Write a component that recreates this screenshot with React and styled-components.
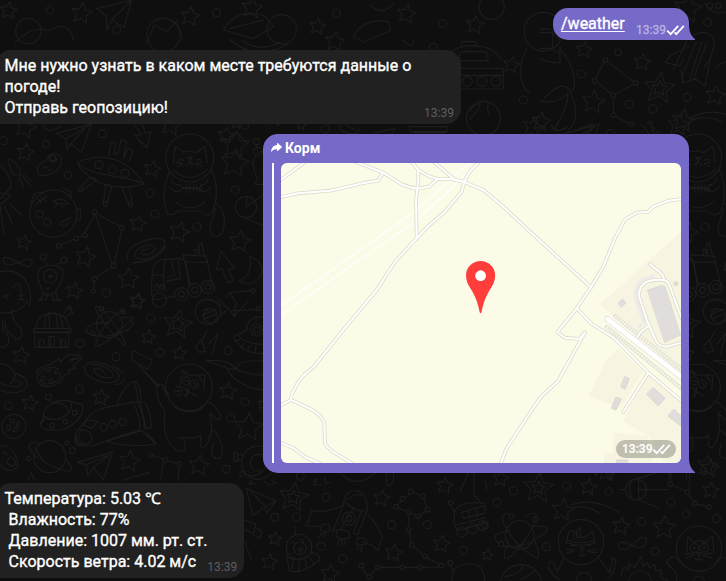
import React from "react";
import styled, { createGlobalStyle } from "styled-components";

const GlobalStyle = createGlobalStyle`
  html, body { margin: 0; background: #0f0f0f; overflow: hidden; }
  * { box-sizing: border-box; }
`;

const Screen = styled.main`
  position: relative;
  width: 726px;
  height: 581px;
  overflow: hidden;
  background: #0f0f0f;
  font-family: Roboto, "Noto Sans", sans-serif;
  color: #fff;
`;

const Wallpaper = styled.svg`
  position: absolute;
  inset: 0;
  fill: none;
  stroke: #1d1d1e;
  stroke-width: 3.4;
  stroke-linejoin: round;
  stroke-linecap: round;
`;

const Messages = styled.div`
  position: relative;
  display: flex;
  flex-direction: column;
  align-items: flex-start;
  gap: 10px;
  padding: 8px 37px 0 0;
`;

const Bubble = styled.article`
  position: relative;
  display: flex;
  width: ${(p) => p.$width}px;
  height: ${(p) => p.$height}px;
`;

const Incoming = styled(Bubble)`
  margin-left: -4px;
  padding: 5px 7px 3px 8.6px;
  border-radius: 15px 15px 15px 0;
  background: #212121;
`;

const Outgoing = styled(Bubble)`
  align-self: flex-end;
  border-radius: 15px 15px 0 15px;
  background: #766ac8;
`;

const CommandBubble = styled(Outgoing)`
  padding: 5px 4px 2px 8px;
  justify-content: space-between;
`;

const LocationBubble = styled(Outgoing)`
  flex-direction: column;
  padding: 4px 8px 10px;
`;

const Text = styled.p`
  margin: 0;
  flex: 1;
  font-size: 16px;
  line-height: 21px;
  white-space: pre;
  -webkit-text-stroke: 0.35px #fff;
`;

const Command = styled.a`
  font-size: 16px;
  line-height: 21px;
  text-decoration: underline;
  text-underline-offset: 2px;
  -webkit-text-stroke: 0.35px #fff;
`;

const Meta = styled.span`
  display: flex;
  align-items: center;
  align-self: flex-end;
  height: 16px;
  font-size: 12px;
  line-height: 16px;
  color: ${(p) => p.$color};
  -webkit-text-stroke: ${(p) => (p.$strong ? "0.3px" : "0")} currentColor;
`;

const TailShape = styled.svg`
  position: absolute;
  right: -6px;
  bottom: 0;
  fill: #766ac8;
`;

const Forwarded = styled.header`
  display: flex;
  align-items: center;
  gap: 3px;
  height: 19px;
  font-size: 14px;
  font-weight: 700;
`;

const Quote = styled.div`
  display: flex;
  margin-top: 6px;
  margin-left: 1px;
  padding-left: 7px;
  border-left: 2px solid #fff;
  height: 300px;
`;

const MapCard = styled.div`
  position: relative;
  width: 400px;
  height: 300px;
  border-radius: 6px;
  overflow: hidden;
  background: #fcfbe7;
`;

const MapBadge = styled.span`
  position: absolute;
  right: 5px;
  bottom: 5px;
  display: flex;
  align-items: center;
  width: 60px;
  height: 18px;
  padding-left: 6px;
  border-radius: 9px;
  background: rgba(94, 94, 84, 0.36);
  font-size: 12px;
  font-weight: 500;
  -webkit-text-stroke: 0.2px #fff;
`;

const Tail = () => (
  <TailShape width="6" height="16" viewBox="0 0 6 16">
    <path d="M0 0C0 7 1.5 11.5 6 15V16H0Z" />
  </TailShape>
);

const Ticks = () => (
  <svg width="19" height="12" viewBox="0 0 19 12" fill="none" stroke="#fff" strokeWidth="1.75">
    <path d="M1.2 6.6 4.7 10.2 12.2 1.8M8.6 8.4 10.3 10.2 17.8 1.8" />
  </svg>
);

const ForwardIcon = () => (
  <svg width="11" height="9" viewBox="0 0 11 9" fill="#fff">
    <path d="M6 .3Q6.5-.2 7 .3L10.7 3.6Q11.2 4 10.7 4.5L7 7.8Q6 8.4 6 7.4V6.3C3.2 6.2 1.8 7 .8 8.5.3 9.2-.1 8.6.1 7.8.6 4.6 2.5 2.2 6 1.9Z" />
  </svg>
);

const starPath = ([cx, cy, r, rot = 0]) =>
  Array.from({ length: 10 }, (_, i) => {
    const a = ((i * 36 - 90 + rot) * Math.PI) / 180;
    const d = i % 2 ? r * 0.47 : r;
    return `${i ? "L" : "M"}${(cx + d * Math.cos(a)).toFixed(1)} ${(cy + d * Math.sin(a)).toFixed(1)}`;
  }).join("") + "Z";

const Doodles = ({ x, y, stars = [], rings = [], path }) => (
  <g transform={`translate(${x} ${y}) scale(.33333)`}>
    {stars.map((s, i) => <path key={i} d={starPath(s)} />)}
    {rings.map(([cx, cy, r = 12], i) => <circle key={i} cx={cx} cy={cy} r={r} />)}
    <path d={path} />
  </g>
);

const leftUpper = {
  stars: [[76, 83, 27, 10], [76, 8, 34, 15], [457, 132, 26, 12], [678, 31, 25, 8], [704, 115, 44, 8], [414, 297, 26, 10], [538, 322, 32, 15], [719, 350, 34, 8], [72, 352, 23, 12], [256, 397, 32, 12], [385, 462, 33, 4], [223, 498, 26, 12], [512, 0, 34, 8], [412, 528, 24, 12]],
  rings: [[10, 47], [138, 57, 11], [307, 26], [204, 151, 11], [450, 204], [465, 267], [591, 306], [706, 195], [319, 504], [734, 0], [297, 119], [338, 134], [375, 145], [160, 266, 71], [119, 268, 11], [141, 291, 11], [241, 194, 6], [316, 236, 6], [392, 240, 6], [284, 261, 7], [366, 309, 7], [341, 423, 7], [254, 331, 7], [229, 340, 7], [176, 363, 7], [284, 461, 7], [280, 499, 6], [151, 454, 20], [151, 454, 4], [130, 396, 9], [192, 406, 9], [569, 99, 72], [544, 508, 20], [584, 496, 20], [624, 486, 20], [544, 508, 9], [584, 496, 9], [624, 486, 9], [738, 246, 32], [770, 50, 9], [157, 102, 9], [760, 497, 6]],
  path: `M170 25 273-2 245 82 213 56 201 73 198 42ZM213 56 257 7M198 42 260 5
  M112 135C110 108 145 115 144 94C150 80 190 84 184 112C175 145 145 157 115 148ZM145 95Q160 80 172 105Q155 115 145 95M130 130Q136 122 142 130M145 136Q151 130 155 137
  M24 102Q55 107 62 150L40 148Q28 125 24 102M58 156 70 188M66 152 94 184M70 148 94 167
  M0 120Q30 145 34 185L0 222M0 240 11 325M13 244 38 299M31 238 63 270M0 204 32 207Q25 225 0 238
  M232 112Q355 62 432 177Q310 210 240 128ZM234 116C290 160 360 145 432 177M326 92 334 50 349 55 341 88 354 83 364 44 380 50 370 99 384 70 400 78 388 108
  M270 158 239 190M290 166 246 196M316 182 311 232M335 184 322 234M366 190 387 237M389 194 397 236M270 158Q282 154 290 166M314 181Q325 175 335 184M366 190Q380 180 390 194
  M285 268 252 326M290 266 360 304M286 268 337 417M365 316 343 417M335 426 289 457M283 468 281 492M248 333 235 337M222 343 182 361
  M94 245Q94 200 119 202Q142 205 139 217Q118 225 105 243M112 219 124 235M123 214 139 230M185 197 213 216V201L190 190M232 252 242 253 240 286 228 285M159 230Q184 213 204 235Q182 240 159 230M172 235 164 247M185 237 187 249M180 294Q200 285 213 276M178 298Q195 310 207 294
  M520 112 526 64 550 81Q570 74 587 83L615 64 622 112M536 107Q543 97 550 107M590 106Q598 98 605 107M563 97 577 97 570 106ZM570 106Q568 120 558 119M571 109Q575 122 581 117M530 112 548 116M532 124 548 119M605 112 590 116M605 124 590 119
  M509 137C488 185 489 230 501 265Q515 275 535 258H600Q620 281 638 260C655 215 651 170 633 131M521 137Q569 180 622 133M513 164Q517 178 538 180M626 160Q620 180 601 181M508 187Q527 208 545 195M632 187Q613 209 596 195M526 230Q570 266 617 230M650 235C685 270 676 333 650 334C612 331 638 289 647 251
  M536 179 550 190 600 188 609 178M542 198 550 188 607 193M560 178V202M570 176V203M580 178V202M590 180V198
  M383 404C370 355 470 330 489 345C510 358 466 406 420 402C382 391 420 360 452 360C480 367 459 390 430 389Q410 379 445 372M398 413C450 412 487 390 496 364
  M10 398C25 388 70 430 90 425C105 408 90 395 70 407C44 417 17 428 10 410Z
  M113 447C112 415 190 410 190 445C187 478 168 495 165 503C145 512 138 512 130 503 119 480 113 465 113 447M137 486 143 494 148 486M144 420 133 404M173 418 184 411M130 506 126 520 115 525H139L142 509M157 508 160 526H182L170 516 168 502M146 454H157
  M456 510C451 425 465 400 495 403L538 400C560 402 560 420 563 450L568 482M495 405 490 455 496 500M459 450H490M514 404 524 451 504 457M535 406 541 460 500 469M549 389 618 394 640 491M561 411 622 412M549 389 571 478M587 388 583 374 593 374 596 388M599 386 596 356 604 353 614 394M458 516 464 525 525 514M470 479Q480 482 474 495Q464 500 464 487ZM485 477Q494 483 488 494Q480 495 480 485Z
  M663 378 704 429 685 433 699 466 684 474 666 431 649 435ZM749 394C825 425 770 497 718 468Q760 450 749 394
  M404 0 424 28 404 32 441 69 452 20 437 25 424-5M130 0Q140 30 180 5M741 216 738 246M738 246 790 210M737 280 795 304M770 60 773 76M789 78Q765 82 758 115 769 160 773 160L765 178H790M2 440C68 425 103 490 88 540M8 512Q15 518 28 508M40 487Q48 468 60 480L65 520M19 510V525M53 513 74 509M56 523 72 524
  M595 530Q630 515 659 540M676 519 690 503 752 497M690 505 712 540`
};

const leftLower = {
  stars: [[63, 167, 27, 8], [412, 5, 24, 8], [445, 112, 23, 8], [533, 73, 45, 8], [533, 73, 22, 8], [538, 160, 22, 8], [303, 293, 26, 8], [90, 310, 25, 8], [388, 484, 33, 8], [684, 274, 27, 8], [745, 382, 44, 5], [597, 497, 32, 8], [790, 312, 19, 8]],
  rings: [[452, 54], [240, 130, 13], [480, 157], [348, 170], [684, 152], [238, 268], [26, 318], [735, 306], [692, 354], [42, 379, 36], [217, 452, 9], [200, 429, 6], [86, 476, 6], [149, 470, 48], [328, 74, 39], [304, 26, 7], [368, 34, 7], [278, 100, 7], [624, 35, 38], [631, 48, 21], [567, 262, 70], [311, 381, 11], [339, 373, 11], [368, 366, 11], [157, 377, 7], [196, 365, 7], [224, 338, 7], [145, 291, 9], [453, 465, 6], [496, 479, 7], [538, 492, 7], [770, 90, 18], [770, 90, 9], [679, 508], [774, 26, 6], [775, 488, 50], [776, 488, 25], [144, 208, 6], [170, 216, 6], [153, 243, 6], [130, 234, 6], [558, 243, 12], [583, 252, 12], [478, 0, 21]],
  path: `M104 142V98H206V142ZM100 85H213V96H100ZM108 84C105 29 205 22 208 84M135 84Q133 45 145 39M148 83V38M166 38Q173 53 172 84M188 84Q184 49 177 40M191 42 204 23 219 38 196 52M201 21 211 20 219 39M115 142V120H132V142M147 142V109H163V142M180 142V120H196V142M120 142V124M152 142V114M185 142V124
  M287 135C285 106 370 0 375 43M286 135C300 155 390 60 398 56C407 45 375 55 366 52M375 137C356 121 270 27 290 19 310 15 394 145 374 136M258 90C265 70 296 65 328 69M397 64C411 94 294 130 257 93
  M0 39C36 42 73 27 84 0M35 30Q37 65 58 81C75 100 58 130 41 111 20 94 15 85 14 67M8 57V90Q31 103 25 129C15 150 0 140-5 132
  M112 224C107 207 130 195 151 193L179 175 180 186 204 163 239 165 210 181 248 173 218 199 228 204 203 211 210 217 190 229 185 242 164 256C135 266 108 257 112 224ZM118 225C120 203 156 195 176 207M181 219Q184 240 164 246Q136 262 119 239
  M258 195C280 170 352 202 357 226C361 262 285 250 263 225Q246 209 258 195M274 195C290 185 339 209 339 227C334 244 275 225 281 206Q300 199 315 220M373 234Q370 254 346 253M337 195 370 218
  M0 190Q37 194 46 225 40 245 30 252M45 220C98 235 91 271 48 278 25 280 10 275 0 272M44 240Q70 247 66 254C53 266 20 257 0 249
  M131 350C126 315 176 298 196 301L247 314C254 340 227 381 180 390 150 393 125 386 119 378ZM133 348C160 375 217 348 215 311M159 310Q185 301 205 329M154 306 148 298M119 378 136 354
  M35 357Q25 351 33 367Q45 373 44 360ZM52 365Q65 364 54 379Q45 379 52 365M23 376Q35 373 31 387Q20 397 19 384ZM43 385Q55 379 53 391Q43 401 39 390Z
  M399 151Q402 154 457 181L443 207Q421 197 395 179ZM415 196 477 258M416 197 471 256
  M350 318C360 280 388 244 405 244Q421 250 424 305M404 247Q413 280 414 307M250 372C270 330 310 319 420 304L438 382M400 311Q420 346 420 389M413 307Q434 350 433 385M432 306Q448 315 455 383L438 386M230 405Q225 433 250 436C300 443 300 420 420 391M249 372Q223 400 225 420 230 440 245 436M244 388C285 391 284 431 255 432Q224 425 244 388M249 374 263 360 294 365 273 385ZM425 391 468 432Q385 445 321 424L424 392M440 398 463 424
  M508 289 491 258Q480 247 470 258 467 297 495 333C488 388 495 429 535 453 556 457 560 448 550 412 573 416 592 415 602 405V440Q620 455 635 390L631 339 650 359Q668 358 659 341Q647 315 618 302M497 285Q500 275 487 263M524 321Q572 350 610 321M634 391C660 395 677 456 660 474C635 481 630 460 640 429M536 412Q550 418 556 412
  M540 260 548 211 570 226 587 225 615 225 611 270M551 212 561 230M595 226 608 245M547 264 529 259M547 272 524 274M546 281 531 287M567 277 553 288M567 277 589 288M551 263 566 275 565 261M560 270 560 292M583 247 590 259M551 240 565 245
  M618 181C665 183 684 178 709 208L680 206Q710 260 795 272M709 208Q708 178 795 183M709 208Q740 224 795 226M618 181 680 204
  M656 0 690 31 703 50 743 4M678 31 663 47M690 33 766 28M703 50 706 15M607 31 625 25M608 45 647 28M612 56 650 42M586 140 604 120 616 154 596 157ZM606 121 620 95M625 134 653 100 638 160
  M739 93C740 40 790 50 795 55M741 90 714 104Q690 110 715 132 735 161 790 160M716 108Q736 133 790 133M719 120 704 124M732 130 722 143M749 137 742 152M768 140 765 158M768 48V65
  M90 429Q101 427 118 430M108 444C122 490 154 500 196 513Q220 516 213 500Q207 485 197 479M90 432Q81 451 113 475M232 487 338 456 310 540 280 502 263 528 260 494ZM280 502 327 466M260 494 328 464M0 438C45 430 65 500 45 506C20 523 0 498 -5 482M22 484Q26 467 40 475 55 493 40 498 25 500 22 484M7 453 12 461M17 455 22 464
  M459 466 489 477M503 482 531 490M537 500 535 540M490 487 482 540M370 540 448 517M702 458H712V485H702ZM712 465 727 463M712 478 723 479M719 524Q723 509 731 516 735 530 722 530ZM84 540 94 518 103 540`
};

const Background = () => (
  <Wallpaper width="726" height="581" viewBox="0 0 726 581">
    {[0, 508].map((shift) => (
      <g key={shift} transform={`translate(${shift} 0)`}>
        <Doodles x={0} y={125} {...leftUpper} />
        <Doodles x={0} y={300} {...leftLower} />
      </g>
    ))}
    <Doodles
      x={540} y={0}
      stars={[[132, 150, 25, 8], [307, 187, 26, 8], [160, 306, 36, 8], [358, 265, 48, 6], [358, 265, 24, 6], [526, 287, 31, 8], [443, 26, 44, 8], [430, 362, 35, 8], [3, 365, 30, 8]]}
      rings={[[234, 157, 10], [124, 222], [196, 181, 7], [163, 242, 7], [287, 249, 7], [220, 286, 7], [220, 346, 7], [275, 373, 7], [268, 313], [338, 327], [441, 292], [503, 67], [510, 17, 8], [535, 17, 8]]}
      path="M192 187 166 236M202 184 281 245M170 245 214 282M281 252 226 282M220 293V339M226 349 268 371M455 125Q450 100 490 97 528 100 521 143L510 178 496 257 464 236M470 125 424 232M485 126 450 235M500 128 462 232M448 140Q379 165 376 188L419 197Q435 180 425 173M424 206 428 248 470 236M440 122 399 210M510 178 492 202M495 8Q507 35 535 38L558 36M530 203Q540 190 558 185M445 357Q500 325 558 343M451 360Q510 344 545 365M320 370 333 363 343 389M0 98H38V145H0M0 90Q38 78 40 102M0 145Q20 140 60 158M60 140V188Q24 190 0 175M38 100 58 118M62 150C115 210 108 280 91 270 68 245 43 264 13 294M0 302C32 312 58 302 82 284M84 270C88 325 50 370 43 390M91 275C113 325 113 366 85 390M110 390 157 371 152 390"
    />
    <Doodles
      x={230} y={40}
      stars={[[315, 5, 31, 8], [214, 256, 15, 8], [15, 315, 42, 8], [135, 238, 22, 8], [20, 250, 18, 8]]}
      rings={[[286, 267, 12], [712, 124, 15], [755, 124, 15], [798, 124, 15], [610, 22, 12], [760, 235, 51], [84, 335, 13]]}
      path="M35 0Q85 40 150 7M0 0Q75 64 175 12M515 0Q550 30 550 0M694 15V5H738V15M660 42Q674 20 720 17 790 15 815 60M692 62Q680 35 705 34L760 35Q777 38 774 62ZM693 85H820M693 106H820M693 147H820V85M540 260H652V275H540ZM550 278H645M330 250Q324 271 350 278 388 290 388 262M345 250Q350 260 378 270M435 278 495 266 470 310M720 215Q725 194 752 190L744 208 720 238M775 190Q770 220 780 223M0 290 23 280 45 302 62 300"
    />
    <Doodles
      x={0} y={0}
      stars={[[25, 32, 27, 8], [245, 40, 32, 8], [570, 50, 30, 8], [756, 24, 32, 8], [952, 80, 26, 8], [1220, 42, 30, 10], [1425, 75, 28, 8], [1535, 195, 26, 10]]}
      rings={[[150, 30], [350, 90], [650, 38], [1010, 40], [1328, 70], [1570, 300], [1475, 20, 38], [490, 105, 50], [845, 88, 44], [85, 93, 38], [1630, 95, 58]]}
      path="M45 128Q95 75 150 92 205 55 220 120M290 26 395 0 372 82 335 60 320 92 320 47ZM335 60 395 0M440 130 462 76 502 94 530 62 548 118M670 90Q710 20 795 48L820 80 760 116ZM690 86 790 60M1060 110Q1090 52 1165 65L1172 92 1090 126ZM1110 15Q1145 50 1180 12M1580 145C1550 205 1560 260 1590 280"
    />
    <Doodles
      x={245} y={465}
      stars={[[145, 97, 46, 8], [145, 97, 21, 8], [90, 222, 21, 8], [73, 291, 25, 8], [410, 100, 26, 8], [599, 62, 26, 8], [590, 237, 27, 8], [446, 264, 27, 8], [255, 327, 30, 8]]}
      rings={[[166, 34], [243, 97], [89, 157], [155, 156], [229, 244], [293, 281], [439, 179], [547, 179], [655, 256], [498, 80, 7], [472, 102, 7], [534, 94, 7], [453, 125, 7], [547, 134, 7], [519, 154, 7], [491, 141, 7], [491, 194, 7], [500, 240, 7], [540, 274, 7], [589, 302, 7], [526, 307, 7], [472, 307, 7], [399, 307, 7], [349, 302, 7], [373, 335, 7], [312, 161, 20], [312, 161, 9], [162, 246, 38], [165, 250, 19], [617, 114, 7], [616, 294, 7], [650, 201, 15], [683, 191, 15], [714, 182, 15]]}
      path="M3 70 93 107 65 145 60 124 24 151ZM60 124 15 76M65 124 93 107M0 165 33 178 26 206 0 194M33 188 51 201 43 221 25 210M0 230 19 286M295 112C305 60 370 65 367 135L338 210 327 206M297 108Q340 149 367 135M297 115 262 202M326 127 287 192M349 138 325 205M305 105Q335 83 350 92M290 123Q240 145 200 137L185 183 225 185M370 150Q400 182 412 214L398 257Q380 235 355 232M227 195Q229 170 254 180L255 196 240 203ZM274 203Q283 183 312 203L315 217 290 224 274 214ZM335 228Q341 209 364 226L365 237 335 240ZM230 205 222 220M240 205 234 220M283 223 278 240M292 226 288 245M301 224 299 240M342 241 337 254M351 242 348 259
      M148 183 152 208M125 238 126 276Q165 295 198 265L200 242M126 275 132 317Q173 330 223 285 230 280 215 267 200 262 198 265M146 287 139 312M165 288 160 318M181 283 185 310M194 275 207 298M140 233Q148 225 152 240M168 223Q177 225 173 235M160 250 172 249 167 264ZM505 82 528 91M496 86 479 98M469 109 458 120M460 128 484 140M498 143 512 151M525 150 544 138M537 100 545 127M491 149V187M492 200 499 233M507 245 534 268M546 278 583 299M582 306 534 307M519 307H479M464 307H406M393 311 378 329M367 333 353 308
      M617 120 628 142Q640 105 720 115M628 142V182L720 158M650 142 720 122V145L655 160ZM670 136 674 157M693 129 698 150M630 185 637 196 720 175M690 93 706 110M617 300 625 320Q640 289 700 300 720 320 719 348M625 320 620 348M670 24 645 80M687 24V90M0 28Q25 40 53 20M20 48 12 57H32M60 49 70 60 93 54 80 45M215 45 205 60H228M240 38 242 57 255 52M205 50 218 40M285 24Q335 74 390 24M425 25Q420 58 430 62 447 58 446 25"
    />
    <Doodles
      x={485} y={465}
      stars={[[47, 41, 25, 8], [160, 69, 47, 5], [160, 69, 21, 5], [310, 66, 26, 8], [233, 136, 35, 8], [408, 183, 28, 8], [538, 188, 35, 3], [677, 77, 26, 8], [8, 270, 18, 8], [675, 10, 28, 8], [365, 22, 28, 8]]}
      rings={[[85, 77], [36, 112], [244, 63], [371, 79, 11], [470, 170], [510, 259], [558, 111], [603, 147], [694, 161], [184, 245], [453, 74, 31], [556, 58, 7], [608, 82, 7], [630, 116, 7], [672, 126, 7], [104, 210, 43], [79, 154, 7], [151, 163, 8], [48, 237, 8], [288, 231, 68], [642, 251, 68], [628, 249, 13], [658, 248, 13], [628, 249, 3], [658, 248, 3], [465, 353, 35], [297, 344, 22], [108, 362, 63], [641, 350, 17], [0, 180, 10]]}
      path="M407 74H422M461 45V102M438 46Q430 75 440 101M458 74H549M460 42 515 24M463 106 523 129M557 50 559 24M612 75 614 24M563 61 601 78M611 89 627 110M637 118 665 124M257 120Q325 95 403 142M270 127Q310 119 347 147
      M74 147Q41 142 58 180 89 240 145 274 168 287 158 252L145 219M120 154C165 130 158 155 138 195 107 250 70 284 62 281 52 276 60 249 71 230M39 236C15 200 43 210 75 195M145 184C190 180 200 195 165 214 116 250 63 250 54 240
      M243 235 252 199Q270 190 281 217M267 205V223M278 218Q267 199 286 188V216M287 218 303 215 322 199 329 232M244 224Q286 242 330 225M243 232Q285 249 331 233M258 242H273M302 241H318M284 247H298L291 259ZM291 259V271M282 268Q291 281 300 268M245 252 266 256M247 262 266 260M338 252 310 256M334 263 310 260M238 276 218 320 204 293Q190 284 190 306 203 338 226 342M339 276 374 323 382 286Q372 267 390 284 395 325 366 342M405 251C390 237 408 223 434 238C464 255 486 248 484 224 473 209 460 222 441 241Q420 258 405 251M408 330 416 306 430 313 431 296 450 308 456 294 469 275 474 305 487 293 493 308 510 299 511 318 530 315 525 336 548 346M60 335Q100 332 117 301M105 344Q140 329 150 314
      M606 261 608 216 626 232Q641 224 660 231L683 214 686 263M634 263H651L642 273ZM642 273V285M630 281Q642 290 655 280M600 267 628 266M604 278 626 271M681 265 655 267M680 278 656 271M590 293 568 275Q544 280 545 294L575 324V348M694 292 713 274 725 284M0 75Q9 68 0 50M0 174Q8 180 0 190"
    />
  </Wallpaper>
);

const roads = [
  "M-3 19 24-1",
  "M-1 34.3 17 30.3 49 27.7 84 19.7 97 17.7 102.3 9.7",
  "M75-1 102.3 9.7 120.7 21.3Q127 24 135.7 25.7L148 23.7 156.7 16H170.7L183.3 19 202.3 27 222.3 43.7 249 68.7 310 124.3",
  "M130.7-1 137.3 7 147.3 13 156.7 16",
  "M137.3 7V17L135 37 135.7 75.5",
  "M153-1 174 17 183.3 19",
  "M198-1 187.3 10.3 183.3 19 180.7 28.7 164 48.7 147.3 63 135.7 75.3 114 98.7 95.7 127 62.3 167 32.3 204.3 24 211 18 217.7 11.3 230.3 9.7 237",
  "M-1 242.7 9.7 237 18 240.3 33.3 248 39 253 43.3 259.3 44 280.3 46.7 284.3 52.3 289 72 301",
  "M-1 279.7 12.3 285 24 294 40 301",
  "M401 36 387.3 37.7 372.3 43.7 367.3 48.7 355.7 49.7 344 56.3 334 75.3 322.3 103.7 310 124.3 295.7 145.3 276.3 169.3 284 174.7 298.3 176 304 169.3 277.3 217.7 259.7 234.3 249 249.7 225.7 285.3 219.5 301",
  "M296 145.5 310.7 161 332.3 174.3 367.3 209.7 401 238.5",
  "M367.3 209.7 342.3 249",
  "M355 176.3 359.7 168.7 367.3 163",
  "M369 101 381.7 112 383 117",
  "M401 179.5 385.7 183.7Q379 183.7 375.5 179L365.7 157 358.3 133.7Q357 125 364 119.7 371 116 383 117 387 118 388.3 122L402 159",
];

const LocationMap = () => (
  <svg width="400" height="300" viewBox="0 0 400 300" fill="none" strokeLinejoin="round" strokeLinecap="round">
    <g fill="#f7f5e2">
      <path d="M400 68.7 319 141.3 400 210ZM337.3 185.3 325.7 197 307.3 232.7 340 245.5 362 208ZM367 211 400 240V300H384L368 274 342 258ZM332.3 269.7 366 273 371 300H323V290H332.3Z" />
    </g>
    <path d="M374 113.7 362.3 117Q355 121 354.3 133.7L364 161M361 146 365 158M357 164 361 161" stroke="#ecebe8" strokeWidth="4" strokeLinecap="butt" />
    <path d="M366.7 127 380.5 122.5 384 123.5 399.5 172 384 179.3Z" fill="#e2dddd" stroke="#d7d4d0" strokeWidth=".7" />
    <g fill="#e2dddd" stroke="#d5d2ce" strokeWidth=".8">
      <path d="M337.3 140.3 341.7 136.3 345 139.7 340.7 144ZM393 119.5 396 118.5 397 121.5 394 122.5ZM344 213.7 348.3 215.7 344 226.3 340 224ZM335 234.3 340.3 236 335 247 330.7 245.3ZM372.3 224.7 384 235.3 377.3 243 365.7 231.3ZM393 246.3 401 254V264L387 253ZM336 297H346.7V302H336Z" />
    </g>
    <path d="M0 142.7 135.7 47 187.3.3M0 152 135.7 57 171 25 193 2" stroke="#fff" strokeWidth="1.1" />
    <path d="M334 153 401 207M325.7 164 401 226" stroke="#e3e1d3" strokeWidth="4" />
    <path d="M334 153 401 207M325.7 164 401 226" stroke="#f8f7ea" strokeWidth="2.6" strokeDasharray="1.8 1.2" strokeLinecap="butt" />
    {roads.map((d) => <path key={d} d={d} stroke="#dedccb" strokeWidth="3.7" />)}
    {roads.map((d) => <path key={d} d={d} stroke="#fff" strokeWidth="2" />)}
    <path d="M326.5 156 403 216" stroke="#d9d8d1" strokeWidth="6" />
    <path d="M326.5 156 403 216" stroke="#fff" strokeWidth="4.8" />
    <path
      fill="#ff3d3b"
      d="M199.6 98C191.4 98 185 104.4 185 112.5 185 117.5 187 121.5 189.5 125.5 194 132.5 196.7 139 198.7 149.3Q199.6 151.2 200.5 149.3C202.5 139 205.2 132.5 209.7 125.5 212.2 121.5 214.2 117.5 214.2 112.5 214.2 104.4 207.8 98 199.6 98Z"
    />
    <circle cx="199.6" cy="112.7" r="5.4" fill="#fff" />
  </svg>
);

export default function App() {
  return (
    <>
      <GlobalStyle />
      <Screen>
        <Background />
        <Messages>
          <CommandBubble $width={136} $height={32}>
            <Command>/weather</Command>
            <Meta $color="#bab4e3" $strong>13:39<Ticks /></Meta>
            <Tail />
          </CommandBubble>
          <Incoming $width={465} $height={74}>
            <Text>{"Мне нужно узнать в каком месте требуются данные о\nпогоде!\nОтправь геопозицию!"}</Text>
            <Meta $color="#5d5d60">13:39</Meta>
          </Incoming>
          <LocationBubble $width={426} $height={339}>
            <Forwarded><ForwardIcon />Корм</Forwarded>
            <Quote>
              <MapCard>
                <LocationMap />
                <MapBadge>13:39<Ticks /></MapBadge>
              </MapCard>
            </Quote>
            <Tail />
          </LocationBubble>
          <Incoming $width={248} $height={95}>
            <Text>{"Температура: 5.03 ℃\n Влажность: 77%\n Давление: 1007 мм. рт. ст.\n Скорость ветра: 4.02 м/с"}</Text>
            <Meta $color="#5d5d60">13:39</Meta>
          </Incoming>
        </Messages>
      </Screen>
    </>
  );
}
